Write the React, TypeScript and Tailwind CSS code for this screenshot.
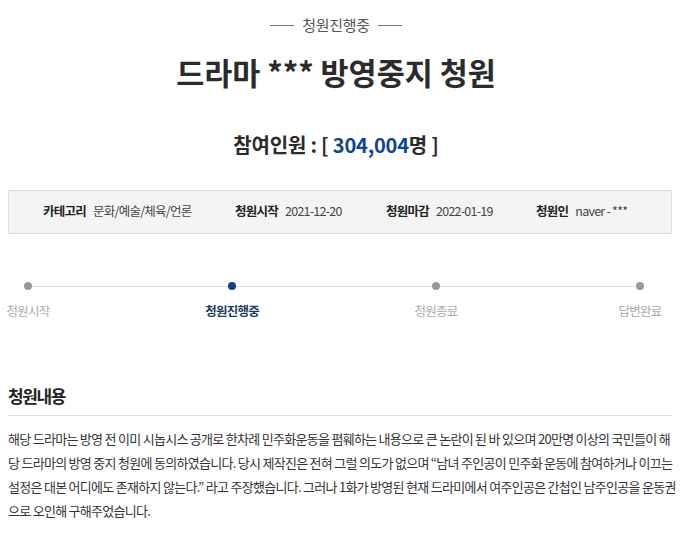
import React from 'react';

const font = { fontFamily: '"Noto Sans CJK KR", "Noto Sans", sans-serif' };

const steps = [
  { label: '청원시작', active: false },
  { label: '청원진행중', active: true },
  { label: '청원종료', active: false },
  { label: '답변완료', active: false },
];

const bodyLines = [
  '해당 드라마는 방영 전 이미 시놉시스 공개로 한차례 민주화운동을 폄훼하는 내용으로 큰 논란이 된 바 있으며 20만명 이상의 국민들이 해',
  '당 드라마의 방영 중지 청원에 동의하였습니다. 당시 제작진은 전혀 그럴 의도가 없으며 “남녀 주인공이 민주화 운동에 참여하거나 이끄는',
  '설정은 대본 어디에도 존재하지 않는다.” 라고 주장했습니다. 그러나 1화가 방영된 현재 드라미에서 여주인공은 간첩인 남주인공을 운동권',
  '으로 오인해 구해주었습니다.',
];

const App: React.FC = () => {
  return (
    <div className="w-[680px] bg-white text-[#333] px-2" style={font}>
      <div className="mr-[8px]">
        <div className="flex items-center justify-center gap-2 pt-[14px] text-[15px] text-[#555] tracking-[-0.02em]">
          <span className="w-[24px] h-px bg-[#777]" />
          <span>청원진행중</span>
          <span className="w-[24px] h-px bg-[#777]" />
        </div>

        <h1 className="text-center text-[30.5px] font-bold text-[#2b2b2b] mt-[15px] leading-[40px]">
          드라마 *** 방영중지 청원
        </h1>

        <div className="text-center text-[20px] font-bold text-[#2b2b2b] mt-[38px] leading-[30px] tracking-[-0.01em]">
          참여인원 : [ <span className="text-[#0d4595]">304,004</span>명 ]
        </div>
      </div>

      <div className="mt-[30px] h-[44px] border border-[#ddd] rounded-[2px] bg-[#f4f4f4] flex items-center text-[12.5px] text-[#444] pl-[34px] tracking-[-0.06em]">
        <div className="flex items-center gap-[7px] w-[192px]">
          <b className="font-bold text-[#222]">카테고리</b>
          <span>문화/예술/체육/언론</span>
        </div>
        <div className="flex items-center gap-[7px] w-[151px]">
          <b className="font-bold text-[#222]">청원시작</b>
          <span>2021-12-20</span>
        </div>
        <div className="flex items-center gap-[7px] w-[150px]">
          <b className="font-bold text-[#222]">청원마감</b>
          <span>2022-01-19</span>
        </div>
        <div className="flex items-center gap-[7px]">
          <b className="font-bold text-[#222]">청원인</b>
          <span>naver - ***</span>
        </div>
      </div>

      <div className="mt-[48px] mr-[12px] relative flex justify-between text-[12.5px] leading-[18px] tracking-[-0.06em]">
        <div className="absolute left-[20px] right-[20px] top-[4px] h-px bg-[#ddd]" />
        {steps.map((s) => (
          <div key={s.label} className="relative w-[40px] flex flex-col items-center">
            <span className={`w-[8px] h-[8px] rounded-full ${s.active ? 'bg-[#0d3f8f]' : 'bg-[#999]'}`} />
            <span className={`mt-[12px] whitespace-nowrap ${s.active ? 'text-[#1e3a6b] font-bold' : 'text-[#aaa]'}`}>
              {s.label}
            </span>
          </div>
        ))}
      </div>

      <h2 className="mt-[64px] text-[17px] font-bold text-[#222] leading-[24px] tracking-[-0.08em]">청원내용</h2>
      <div className="mt-[7px] h-px bg-[#ddd]" />
      <p className="mt-[11px] text-[13px] leading-[24px] text-[#333] tracking-[-0.055em]">
        {bodyLines.map((line) => (
          <span key={line} className="block whitespace-nowrap">{line}</span>
        ))}
      </p>
    </div>
  );
};

export default App;
